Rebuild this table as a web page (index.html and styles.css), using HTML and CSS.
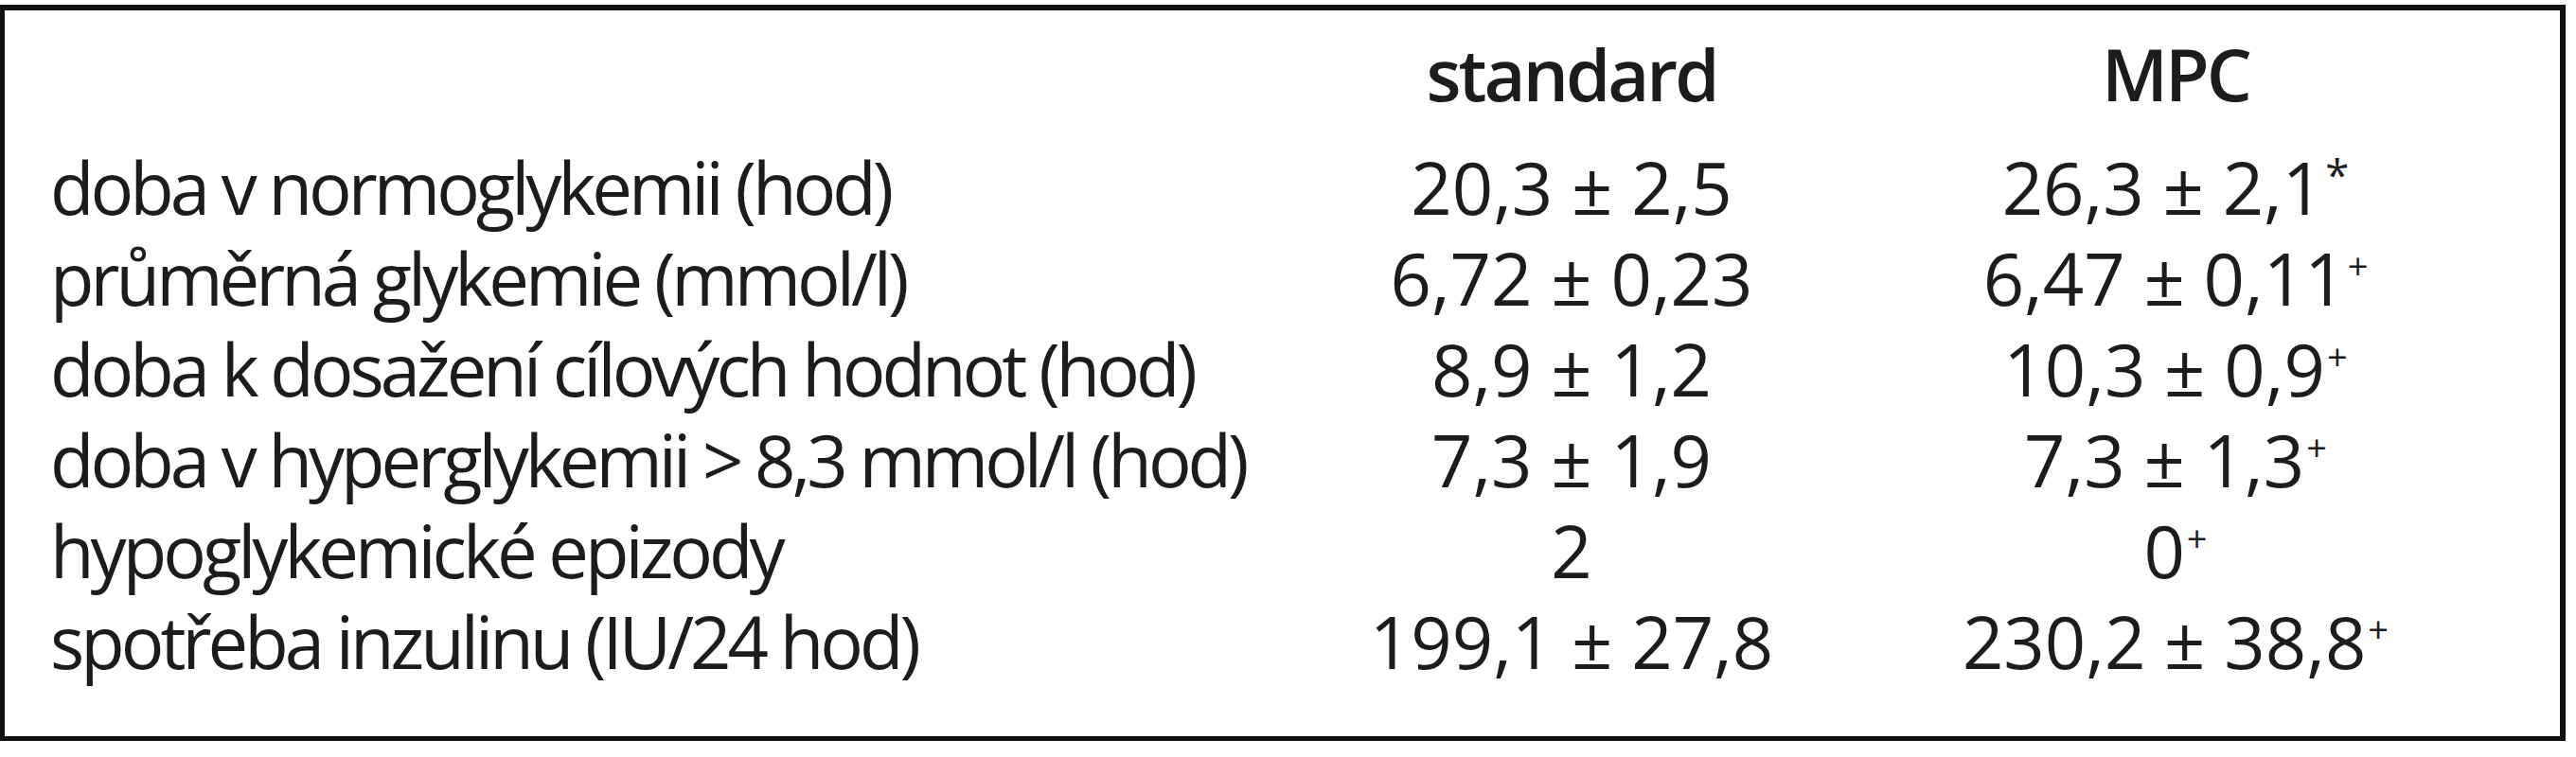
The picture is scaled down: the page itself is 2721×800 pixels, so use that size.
FILE: index.html
```html
<!DOCTYPE html>
<html lang="cs">
<head>
<meta charset="utf-8">
<title>Tabulka</title>
<link rel="stylesheet" href="styles.css">
</head>
<body>
<div class="box">
  <div class="row head">
    <div class="label"></div>
    <div class="val">standard</div>
    <div class="val">MPC</div>
  </div>
  <div class="row">
    <div class="label">doba v normoglykemii (hod)</div>
    <div class="val">20,3 ± 2,5</div>
    <div class="val">26,3 ± 2,1<sup class="mark star">*</sup></div>
  </div>
  <div class="row">
    <div class="label">průměrná glykemie (mmol/l)</div>
    <div class="val">6,72 ± 0,23</div>
    <div class="val">6,47 ± 0,11<sup class="mark">+</sup></div>
  </div>
  <div class="row">
    <div class="label">doba k dosažení cílových hodnot (hod)</div>
    <div class="val">8,9 ± 1,2</div>
    <div class="val">10,3 ± 0,9<sup class="mark">+</sup></div>
  </div>
  <div class="row">
    <div class="label">doba v hyperglykemii &gt; 8,3 mmol/l (hod)</div>
    <div class="val">7,3 ± 1,9</div>
    <div class="val">7,3 ± 1,3<sup class="mark">+</sup></div>
  </div>
  <div class="row">
    <div class="label">hypoglykemické epizody</div>
    <div class="val">2</div>
    <div class="val">0<sup class="mark">+</sup></div>
  </div>
  <div class="row">
    <div class="label">spotřeba inzulinu (IU/24 hod)</div>
    <div class="val">199,1 ± 27,8</div>
    <div class="val">230,2 ± 38,8<sup class="mark">+</sup></div>
  </div>
</div>
</body>
</html>
```

FILE: styles.css
```css
html, body {
  margin: 0;
  padding: 0;
  background: #ffffff;
}

body {
  font-family: "Open Sans", "Noto Sans", sans-serif;
  color: #1c1c1c;
  width: 2721px;
}

.box {
  margin-top: 5px;
  width: 2710px;
  height: 778px;
  box-sizing: border-box;
  border-style: solid;
  border-color: #111111;
  border-width: 6px 6px 5px 5px;
  padding: 19px 87px 0 48px;
  background: #ffffff;
}

.row {
  display: grid;
  grid-template-columns: 1288px 638px 638px;
  font-size: 76px;
  line-height: 96px;
  white-space: nowrap;
}

.row.head {
  font-weight: 600;
  padding-bottom: 24px;
}

.row.head .val {
  letter-spacing: -3px;
}

.label {
  letter-spacing: -4px;
}

.val {
  text-align: center;
}

.mark {
  font-size: 0.5em;
  line-height: 0;
  vertical-align: 0.75em;
  margin-left: 2px;
}

.mark.star {
  font-size: 0.6em;
  vertical-align: 0.55em;
}
```
